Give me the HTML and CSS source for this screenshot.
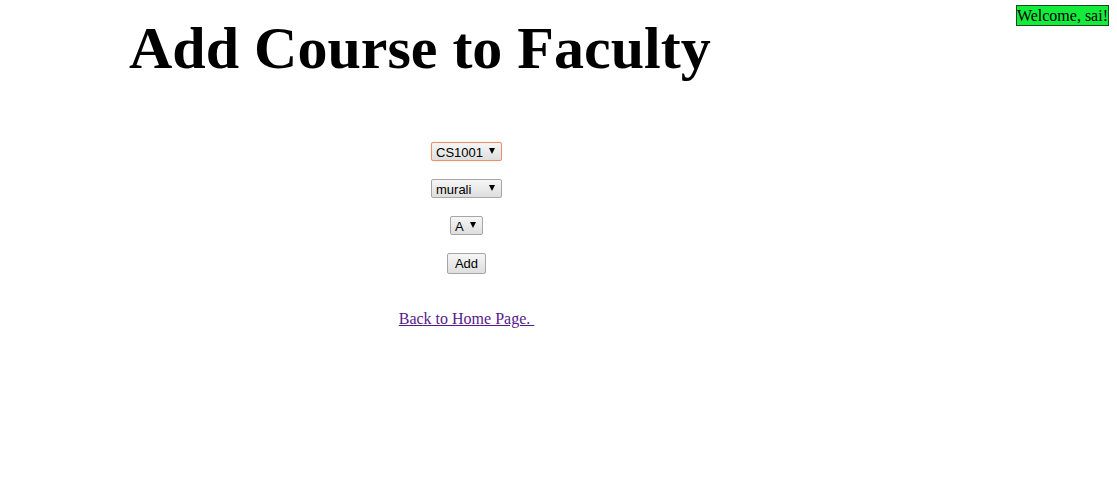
FILE: index.html
```html
<!DOCTYPE html>
<html>
<head>
<meta charset="utf-8">
<title>Add Course to Faculty</title>
<link rel="stylesheet" href="styles.css">
</head>
<body>
<div class="welcome">Welcome, sai!</div>
<h1 class="title">Add Course to Faculty</h1>
<form class="form">
  <span class="sel sel-focus w71"><select><option>CS1001</option></select></span>
  <span class="sel w71"><select><option>murali</option></select></span>
  <span class="sel w33"><select><option>A</option></select></span>
  <button type="button" class="btn">Add</button>
  <a class="back" href="#">Back to Home Page. </a>
</form>
</body>
</html>
```
FILE: styles.css
```css
html, body {
  margin: 0;
  padding: 0;
  background: #fff;
}
body {
  font-family: "Liberation Serif", "Times New Roman", serif;
  font-size: 16px;
  color: #000;
  width: 1117px;
  position: relative;
}
.welcome {
  position: absolute;
  top: 5px;
  right: 8px;
  background: #14ec3c;
  border: 1px solid #1c4a1c;
  font-size: 16px;
  line-height: 19px;
  padding: 0;
}
.title {
  margin: 0;
  padding: 14px 0 0 129px;
  font-size: 60px;
  font-weight: bold;
  line-height: 69px;
}
.form {
  width: 933px;
  display: flex;
  flex-direction: column;
  align-items: center;
  margin-top: 59px;
}
.sel {
  position: relative;
  display: block;
  height: 19px;
  box-sizing: border-box;
  border: 1px solid #a6a6a6;
  border-radius: 2px;
  background: linear-gradient(#f6f6f6, #dedede);
  margin-bottom: 18px;
}
.sel-focus {
  border-color: #e8916a;
  box-shadow: 0 0 1px #f0b090;
}
.w71 { width: 71px; }
.w33 { width: 33px; }
.sel select {
  -webkit-appearance: none;
  appearance: none;
  border: 0;
  background: transparent;
  font-family: "Liberation Sans", Arial, sans-serif;
  font-size: 13px;
  color: #000;
  padding: 0 0 0 4px;
  margin: 0;
  height: 17px;
  line-height: 17px;
  width: 100%;
  outline: none;
}
.sel::after {
  content: "";
  position: absolute;
  right: 6px;
  top: 5px;
  width: 0;
  height: 0;
  border-left: 3px solid transparent;
  border-right: 3px solid transparent;
  border-top: 6px solid #000;
  pointer-events: none;
}
.btn {
  font-family: "Liberation Sans", Arial, sans-serif;
  font-size: 13px;
  height: 21px;
  width: 39px;
  padding: 0;
  margin: 0;
  border: 1px solid #a6a6a6;
  border-radius: 2px;
  background: linear-gradient(#f6f6f6, #dedede);
  color: #000;
}
.back {
  margin-top: 36px;
  color: #551a8b;
  text-decoration: underline;
  font-size: 16px;
  white-space: pre;
}
```
